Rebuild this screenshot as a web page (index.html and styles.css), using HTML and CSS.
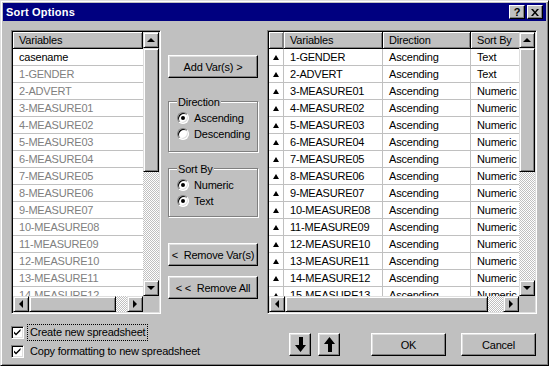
FILE: index.html
```html
<!DOCTYPE html>
<html lang="en">
<head>
  <meta charset="UTF-8" />
  <title>Sort Options</title>
  <link rel="stylesheet" href="styles.css">
</head>
<body>
  <div class="window">
    <div class="titlebar">
      <span class="title">Sort Options</span>
      <div class="title-btns">
        <span class="tbtn">?</span>
        <span class="tbtn">
          <svg width="8" height="7" viewBox="0 0 8 7"><path d="M0 0h2l2 2.5L6 0h2L5 3.5 8 7H6L4 4.5 2 7H0l3-3.5z" fill="#000"/></svg>
        </span>
      </div>
    </div>

    <div class="client">
      <div class="main">

        <!-- Source variables -->
        <div class="list list-left">
          <div class="list-view">
            <div class="list-head">
              <div class="hcell hcell-full">Variables</div>
            </div>
            <div class="row"><div class="cell cell-full">casename</div></div>
            <div class="row used"><div class="cell cell-full">1-GENDER</div></div>
            <div class="row used"><div class="cell cell-full">2-ADVERT</div></div>
            <div class="row used"><div class="cell cell-full">3-MEASURE01</div></div>
            <div class="row used"><div class="cell cell-full">4-MEASURE02</div></div>
            <div class="row used"><div class="cell cell-full">5-MEASURE03</div></div>
            <div class="row used"><div class="cell cell-full">6-MEASURE04</div></div>
            <div class="row used"><div class="cell cell-full">7-MEASURE05</div></div>
            <div class="row used"><div class="cell cell-full">8-MEASURE06</div></div>
            <div class="row used"><div class="cell cell-full">9-MEASURE07</div></div>
            <div class="row used"><div class="cell cell-full">10-MEASURE08</div></div>
            <div class="row used"><div class="cell cell-full">11-MEASURE09</div></div>
            <div class="row used"><div class="cell cell-full">12-MEASURE10</div></div>
            <div class="row used"><div class="cell cell-full">13-MEASURE11</div></div>
            <div class="row used"><div class="cell cell-full">14-MEASURE12</div></div>
          </div>
          <div class="vscroll">
            <span class="sbtn"><i class="tri tri-up"></i></span>
            <span class="thumb thumb-v"></span>
            <span class="track"></span>
            <span class="sbtn"><i class="tri tri-down"></i></span>
          </div>
          <div class="hscroll">
            <span class="sbtn"><i class="tri tri-left"></i></span>
            <span class="thumb thumb-h-left"></span>
            <span class="track"></span>
            <span class="sbtn"><i class="tri tri-right"></i></span>
          </div>
          <div class="corner"></div>
        </div>

        <!-- Middle controls -->
        <div class="controls">
          <button class="btn btn-add">Add Var(s) &gt;</button>

          <div class="group group-direction">
            <div class="group-title">Direction</div>
            <label class="radio"><span class="dot on"></span>Ascending</label>
            <label class="radio"><span class="dot"></span>Descending</label>
          </div>

          <div class="group group-sort">
            <div class="group-title">Sort By</div>
            <label class="radio"><span class="dot on"></span>Numeric</label>
            <label class="radio"><span class="dot on"></span>Text</label>
          </div>

          <button class="btn btn-remove">&lt;&nbsp; Remove Var(s)</button>
          <button class="btn btn-remove-all">&lt; &lt;&nbsp; Remove All</button>
        </div>

        <!-- Sort keys -->
        <div class="list list-right">
          <div class="list-view">
            <div class="list-head">
              <div class="hcell c-ind"></div>
              <div class="hcell c-var">Variables</div>
              <div class="hcell c-dir">Direction</div>
              <div class="hcell c-by">Sort By</div>
            </div>
            <div id="sortRows"></div>
          </div>
          <div class="vscroll">
            <span class="sbtn"><i class="tri tri-up"></i></span>
            <span class="thumb thumb-v"></span>
            <span class="track"></span>
            <span class="sbtn"><i class="tri tri-down"></i></span>
          </div>
          <div class="hscroll">
            <span class="sbtn"><i class="tri tri-left"></i></span>
            <span class="thumb thumb-h-right"></span>
            <span class="track"></span>
            <span class="sbtn"><i class="tri tri-right"></i></span>
          </div>
          <div class="corner"></div>
        </div>
      </div>

      <div class="bottom">
        <div class="checks">
          <label class="check">
            <span class="box"><svg width="9" height="9" viewBox="0 0 9 9"><path d="M1 3.5l2 2 4.5-4.5v2L3 7.5l-2-2z" fill="#000"/></svg></span>
            <span class="check-text focused">Create new spreadsheet</span>
          </label>
          <label class="check">
            <span class="box"><svg width="9" height="9" viewBox="0 0 9 9"><path d="M1 3.5l2 2 4.5-4.5v2L3 7.5l-2-2z" fill="#000"/></svg></span>
            <span class="check-text">Copy formatting to new spreadsheet</span>
          </label>
        </div>
        <button class="btn btn-arrow">
          <svg width="11" height="15" viewBox="0 0 11 15"><path d="M4 0h4v8h3l-5.5 7L0 8h4z" fill="#000"/></svg>
        </button>
        <button class="btn btn-arrow">
          <svg width="11" height="15" viewBox="0 0 11 15"><path d="M4 15h4V7h3L5.5 0 0 7h4z" fill="#000"/></svg>
        </button>
        <button class="btn btn-ok">OK</button>
        <button class="btn btn-cancel">Cancel</button>
      </div>
    </div>
  </div>

  <script>
    // Sort keys currently chosen
    const keys = [
      ['1-GENDER', 'Ascending', 'Text'],
      ['2-ADVERT', 'Ascending', 'Text']
    ];
    for (let i = 1; i <= 13; i++) {
      const n = i < 10 ? '0' + i : '' + i;
      keys.push([(i + 2) + '-MEASURE' + n, 'Ascending', 'Numeric']);
    }

    const rowsDiv = document.getElementById('sortRows');
    keys.forEach(k => {
      const div = document.createElement('div');
      div.className = 'row';
      div.innerHTML = `
        <div class="cell c-ind"><i class="tri tri-up tri-small"></i></div>
        <div class="cell c-var">${k[0]}</div>
        <div class="cell c-dir">${k[1]}</div>
        <div class="cell c-by">${k[2]}</div>
      `;
      rowsDiv.appendChild(div);
    });
  </script>
</body>
</html>
```

FILE: styles.css
```css
html, body {
  margin: 0;
  padding: 0;
  background: #c0c0c0;
}
body {
  font-family: 'Liberation Sans', Arial, sans-serif;
  font-size: 11px;
  letter-spacing: -0.2px;
  color: #000;
}
.window {
  width: 549px;
  height: 366px;
  box-sizing: border-box;
  background: #c0c0c0;
  border: 1px solid;
  border-color: #dfdfdf #000 #000 #dfdfdf;
  box-shadow: inset 1px 1px #fff, inset -1px -1px #808080;
  padding: 2px;
}
.titlebar {
  height: 18px;
  background: #000080;
  display: flex;
  align-items: center;
  justify-content: space-between;
  padding: 0 3px;
}
.title {
  color: #fff;
  font-weight: bold;
  font-size: 11px;
  letter-spacing: 0.2px;
}
.title-btns {
  display: flex;
  gap: 2px;
}
.tbtn {
  width: 16px;
  height: 14px;
  box-sizing: border-box;
  background: #c0c0c0;
  border: 1px solid;
  border-color: #fff #000 #000 #fff;
  box-shadow: inset -1px -1px #808080;
  display: flex;
  align-items: center;
  justify-content: center;
  font-weight: bold;
  font-size: 11px;
  line-height: 1;
}
.client {
  padding: 9px 0 0 8px;
}
.main {
  display: flex;
  height: 284px;
}

/* list views */
.list {
  box-sizing: border-box;
  height: 284px;
  border: 1px solid;
  border-color: #808080 #fff #fff #808080;
  box-shadow: inset 1px 1px #000, inset -1px -1px #dfdfdf;
  padding: 1px;
  display: grid;
  grid-template-columns: 1fr 16px;
  grid-template-rows: 1fr 16px;
}
.list-left {
  width: 150px;
}
.list-right {
  width: 270px;
  margin-left: 9px;
}
.list-view {
  background: #fff;
  overflow: hidden;
  white-space: nowrap;
}
.list-head {
  display: flex;
  height: 17px;
}
.hcell {
  box-sizing: border-box;
  height: 17px;
  line-height: 16px;
  padding-left: 6px;
  background: #c0c0c0;
  border-right: 1px solid #000;
  border-bottom: 1px solid #000;
  box-shadow: inset 1px 1px #fff, inset -1px -1px #808080;
  flex-shrink: 0;
}
.hcell-full {
  width: 100%;
}
.row {
  display: flex;
  height: 17px;
}
.cell {
  box-sizing: border-box;
  height: 17px;
  line-height: 16px;
  padding-left: 6px;
  border-bottom: 1px solid #c0c0c0;
  border-right: 1px solid #c0c0c0;
  flex-shrink: 0;
  overflow: hidden;
}
.cell-full {
  width: 100%;
  border-right: none;
}
.used {
  color: #808080;
}
.c-ind {
  width: 15px;
  padding: 0;
  display: flex;
  align-items: center;
  justify-content: center;
}
.hcell.c-ind {
  border-right-color: #808080;
}
.c-var {
  width: 99px;
}
.c-dir {
  width: 88px;
}
.c-by {
  width: 60px;
}

/* scrollbars */
.vscroll {
  display: flex;
  flex-direction: column;
}
.hscroll {
  display: flex;
}
.sbtn, .thumb {
  box-sizing: border-box;
  background: #c0c0c0;
  border: 1px solid;
  border-color: #dfdfdf #000 #000 #dfdfdf;
  box-shadow: inset 1px 1px #fff, inset -1px -1px #808080;
  flex-shrink: 0;
}
.sbtn {
  width: 16px;
  height: 16px;
  display: flex;
  align-items: center;
  justify-content: center;
}
.thumb-v {
  height: 124px;
}
.thumb-h-left {
  width: 87px;
}
.thumb-h-right {
  width: 203px;
}
.track {
  flex: 1;
  background-color: #fff;
  background-image: conic-gradient(#c0c0c0 25%, #fff 0 50%, #c0c0c0 0 75%, #fff 0);
  background-size: 2px 2px;
}
.corner {
  background: #c0c0c0;
}
.tri {
  display: block;
  width: 0;
  height: 0;
  border: 4px solid transparent;
}
.tri-up {
  border-top: 0;
  border-bottom-color: #000;
}
.tri-down {
  border-bottom: 0;
  border-top-color: #000;
}
.tri-left {
  border-left: 0;
  border-right-color: #000;
}
.tri-right {
  border-right: 0;
  border-left-color: #000;
}
.tri-small {
  border-width: 0 3px 5px;
  border-bottom-color: #000;
}

/* middle controls */
.controls {
  width: 90px;
  margin-left: 7px;
  display: flex;
  flex-direction: column;
}
.btn {
  font-family: inherit;
  font-size: 11px;
  letter-spacing: -0.2px;
  color: #000;
  background: #c0c0c0;
  border: 1px solid;
  border-color: #fff #000 #000 #fff;
  box-shadow: inset -1px -1px #808080, inset 1px 1px #dfdfdf;
  border-radius: 0;
  padding: 0;
  height: 23px;
  box-sizing: border-box;
  flex-shrink: 0;
}
.btn-add {
  margin-top: 25px;
  width: 90px;
}
.group {
  box-sizing: border-box;
  width: 90px;
  border: 1px solid #808080;
  box-shadow: inset 1px 1px #fff, 1px 1px #fff;
  padding: 3px 0 0 8px;
}
.group-direction {
  margin-top: 23px;
  height: 51px;
}
.group-sort {
  margin-top: 16px;
  height: 49px;
}
.group-title {
  margin: -10px 0 0 0;
  padding: 0 1px;
  background: #c0c0c0;
  width: fit-content;
  line-height: 14px;
  height: 15px;
}
.radio {
  display: flex;
  align-items: center;
  height: 16px;
}
.dot {
  box-sizing: border-box;
  width: 12px;
  height: 12px;
  margin-right: 5px;
  border-radius: 50%;
  background: #fff;
  border: 1px solid;
  border-color: #808080 #fff #fff #808080;
  box-shadow: inset 1px 1px #000, inset -1px -1px #dfdfdf;
  display: flex;
  align-items: center;
  justify-content: center;
}
.dot.on::after {
  content: '';
  width: 4px;
  height: 4px;
  border-radius: 50%;
  background: #000;
}
.btn-remove {
  margin-top: 26px;
  width: 90px;
}
.btn-remove-all {
  margin-top: 10px;
  width: 90px;
}

/* bottom row */
.bottom {
  display: flex;
  align-items: flex-start;
  margin-top: 9px;
}
.checks {
  width: 278px;
}
.check {
  display: flex;
  align-items: center;
  height: 19px;
}
.box {
  box-sizing: border-box;
  width: 13px;
  height: 13px;
  margin-right: 4px;
  background: #fff;
  border: 1px solid;
  border-color: #808080 #fff #fff #808080;
  box-shadow: inset 1px 1px #000, inset -1px -1px #dfdfdf;
  display: flex;
  align-items: center;
  justify-content: center;
}
.check-text {
  padding: 0 2px;
  line-height: 15px;
}
.focused {
  outline: 1px dotted #000;
}
.btn-arrow {
  width: 22px;
  margin-top: 10px;
  margin-right: 7px;
  display: flex;
  align-items: center;
  justify-content: center;
}
.btn-ok {
  width: 75px;
  margin: 10px 0 0 24px;
}
.btn-cancel {
  width: 75px;
  margin: 10px 0 0 15px;
}
```
